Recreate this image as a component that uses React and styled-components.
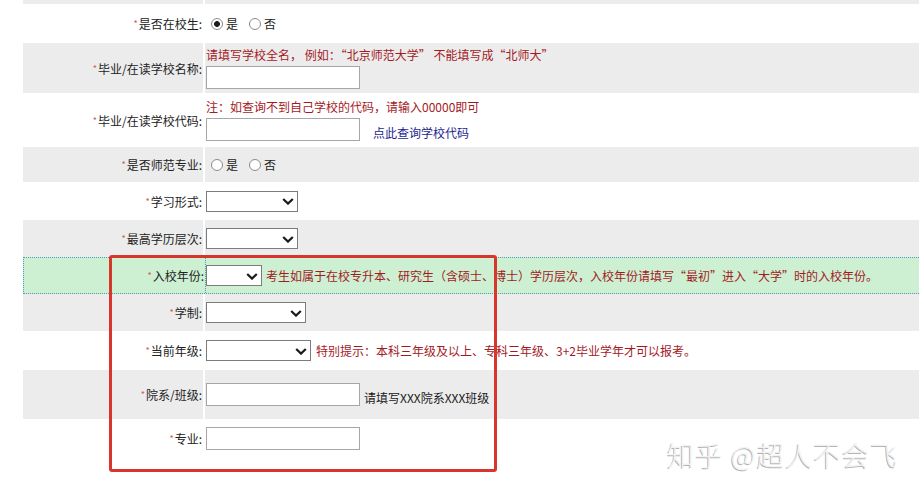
import React from 'react';
import styled, { createGlobalStyle, css } from 'styled-components';

const GlobalStyle = createGlobalStyle`
  html, body { margin: 0; padding: 0; background: #fff; }
  body {
    width: 919px;
    height: 492px;
    overflow: hidden;
    font-family: "Noto Sans CJK SC", "Liberation Sans", sans-serif;
  }
`;

const Page = styled.div`
  position: relative;
  width: 919px;
  height: 492px;
  overflow: hidden;
`;

const Form = styled.div`
  display: flex;
  flex-direction: column;
  margin-left: 23px;
  width: 896px;
`;

const GRAY = '#ececec';

const Row = styled.div`
  display: grid;
  grid-template-columns: 180px 1fr;
  column-gap: 2px;
  height: ${p => p.$h}px;
  box-sizing: border-box;
  background: #fff;
  ${p => p.$highlight && css`
    grid-template-columns: 181px 1fr;
    column-gap: 0;
    background: #cdf0d3;
    border-top: 1px dotted #4e9cb2;
    border-bottom: 1px dotted #4e9cb2;
    border-left: 1px dotted #4e9cb2;
  `}
`;

const Label = styled.div`
  display: flex;
  align-items: center;
  justify-content: flex-end;
  padding-right: 1px;
  background: ${p => (p.$gray ? GRAY : 'transparent')};
  font-size: 12px;
  color: #222;
  white-space: nowrap;
`;

const Star = styled.span`
  color: #cc5a5a;
  font-size: 9px;
  vertical-align: 3px;
  margin-right: 1px;
`;

const Value = styled.div`
  display: flex;
  align-items: center;
  padding-left: 1px;
  background: ${p => (p.$gray ? GRAY : 'transparent')};
  font-size: 12px;
  white-space: nowrap;
  ${p => p.$dotted && css`
    border-left: 1px dotted #4e9cb2;
    padding-left: 0;
  `}
`;

const Stack = styled.div`
  display: flex;
  flex-direction: column;
  gap: 3px;
`;

const Line = styled.div`
  display: flex;
  align-items: ${p => p.$align || 'center'};
`;

const Note = styled.span`
  color: #a31a1f;
  font-size: 12px;
  line-height: 16px;
  margin-left: ${p => p.$ml || 0}px;
`;

const WideQuote = styled.span`
  font-feature-settings: "fwid" 1;
`;

const Hint = styled.span`
  color: #1a1a1a;
  font-size: 12px;
  line-height: 16px;
  margin-left: ${p => p.$ml || 0}px;
`;

const Link = styled.a`
  color: #1d1d8f;
  font-size: 12px;
  line-height: 16px;
  text-decoration: none;
  margin-left: ${p => p.$ml || 0}px;
`;

const RadioGroup = styled.div`
  display: flex;
  align-items: center;
  padding-left: 5px;
  gap: 11px;
`;

const RadioItem = styled.label`
  display: inline-flex;
  align-items: center;
  gap: 3px;
  font-size: 12px;
  color: #222;
`;

const Radio = styled.input.attrs({ type: 'radio' })`
  appearance: none;
  margin: 0;
  width: 12px;
  height: 12px;
  box-sizing: border-box;
  border: 1px solid #8c8c8c;
  border-radius: 50%;
  background: #fff;
  &:checked {
    background: radial-gradient(circle, #1e1e1e 0 2.6px, #fff 3.2px);
  }
`;

const TextInput = styled.input.attrs({ type: 'text' })`
  width: 154px;
  height: 23px;
  box-sizing: border-box;
  margin: 0;
  padding: 0 2px;
  border: 1px solid #a6a6a6;
  border-radius: 0;
  background: #fff;
  font-size: 12px;
`;

const SelectWrap = styled.span`
  position: relative;
  display: inline-flex;
  width: ${p => p.$w}px;
  height: 21px;
  flex: none;
`;

const NativeSelect = styled.select`
  appearance: none;
  width: 100%;
  height: 100%;
  margin: 0;
  box-sizing: border-box;
  border: 1px solid #7c7c7c;
  border-radius: 0;
  background: #fff;
  font-size: 12px;
`;

const Chevron = styled.svg`
  position: absolute;
  right: 4px;
  top: 50%;
  margin-top: -3px;
  pointer-events: none;
`;

const Select = ({ w }) => (
  <SelectWrap $w={w}>
    <NativeSelect defaultValue="">
      <option value=""></option>
    </NativeSelect>
    <Chevron width="12" height="7" viewBox="0 0 12 7">
      <path d="M1.2 1 L6 5.6 L10.8 1" fill="none" stroke="#1a1a1a" strokeWidth="2.2" />
    </Chevron>
  </SelectWrap>
);

const Annotation = styled.div`
  position: absolute;
  left: 109px;
  top: 255px;
  width: 388px;
  height: 217px;
  box-sizing: border-box;
  border: 3px solid #d8352c;
  border-radius: 3px;
  pointer-events: none;
`;

const Watermark = styled.div`
  position: absolute;
  left: 667px;
  top: 436px;
  font-family: "Noto Sans CJK SC", sans-serif;
  font-weight: 300;
  font-size: 27px;
  line-height: 38px;
  letter-spacing: 1.3px;
  color: #f2f2f2;
  text-shadow: -1px 1px 0 #b4b4b4;
  white-space: nowrap;
  pointer-events: none;
`;

const Req = ({ children }) => (
  <>
    <Star>*</Star>
    {children}:
  </>
);

export default function App() {
  return (
    <Page>
      <GlobalStyle />
      <Form>
        <Row $h={4}>
          <Label $gray />
          <Value $gray />
        </Row>

        <Row $h={39}>
          <Label><Req>是否在校生</Req></Label>
          <Value>
            <RadioGroup>
              <RadioItem><Radio name="zx" defaultChecked />是</RadioItem>
              <RadioItem><Radio name="zx" />否</RadioItem>
            </RadioGroup>
          </Value>
        </Row>

        <Row $h={50}>
          <Label $gray><Req>毕业/在读学校名称</Req></Label>
          <Value $gray>
            <Stack>
              <Note>
                请填写学校全名， 例如：<WideQuote>“</WideQuote>北京师范大学<WideQuote>”</WideQuote> 不能填写成<WideQuote>“</WideQuote>北师大<WideQuote>”</WideQuote>
              </Note>
              <Line>
                <TextInput />
              </Line>
            </Stack>
          </Value>
        </Row>

        <Row $h={54}>
          <Label><Req>毕业/在读学校代码</Req></Label>
          <Value>
            <Stack>
              <Note>注：如查询不到自己学校的代码，请输入00000即可</Note>
              <Line $align="flex-end">
                <TextInput />
                <Link href="#" $ml={13}>点此查询学校代码</Link>
              </Line>
            </Stack>
          </Value>
        </Row>

        <Row $h={35}>
          <Label $gray><Req>是否师范专业</Req></Label>
          <Value $gray>
            <RadioGroup>
              <RadioItem><Radio name="sf" />是</RadioItem>
              <RadioItem><Radio name="sf" />否</RadioItem>
            </RadioGroup>
          </Value>
        </Row>

        <Row $h={38}>
          <Label><Req>学习形式</Req></Label>
          <Value><Select w={92} /></Value>
        </Row>

        <Row $h={37}>
          <Label $gray><Req>最高学历层次</Req></Label>
          <Value $gray><Select w={92} /></Value>
        </Row>

        <Row $h={37} $highlight>
          <Label><Req>入校年份</Req></Label>
          <Value $dotted>
            <Line>
              <Select w={56} />
              <Note $ml={4}>考生如属于在校专升本、研究生（含硕士、博士）学历层次，入校年份请填写“最初”进入“大学”时的入校年份。</Note>
            </Line>
          </Value>
        </Row>

        <Row $h={37}>
          <Label $gray><Req>学制</Req></Label>
          <Value $gray><Select w={100} /></Value>
        </Row>

        <Row $h={39}>
          <Label><Req>当前年级</Req></Label>
          <Value>
            <Line>
              <Select w={105} />
              <Note $ml={5}>特别提示：本科三年级及以上、专科三年级、3+2毕业学年才可以报考。</Note>
            </Line>
          </Value>
        </Row>

        <Row $h={49}>
          <Label $gray><Req>院系/班级</Req></Label>
          <Value $gray>
            <Line $align="flex-end">
              <TextInput />
              <Hint $ml={4}>请填写XXX院系XXX班级</Hint>
            </Line>
          </Value>
        </Row>

        <Row $h={39}>
          <Label><Req>专业</Req></Label>
          <Value><TextInput /></Value>
        </Row>
      </Form>

      <Annotation />
      <Watermark>知乎 @超人不会飞</Watermark>
    </Page>
  );
}
